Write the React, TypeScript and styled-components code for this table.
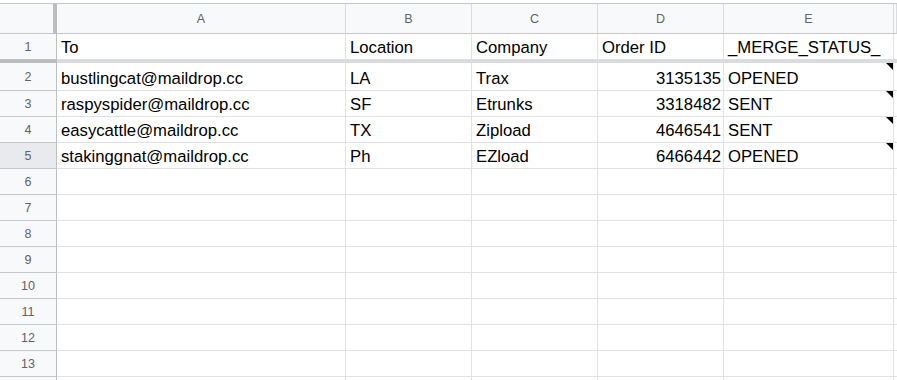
import React from 'react';
import styled, { createGlobalStyle } from 'styled-components';

const GlobalStyle = createGlobalStyle`
  html, body {
    margin: 0;
    padding: 0;
    background: #ffffff;
  }
  body {
    font-family: "Liberation Sans", Arial, sans-serif;
    overflow: hidden;
  }
`;

// widths of the row-number column and columns A..E, rest goes to F
const TEMPLATE = '57px 289px 126px 126px 126px 170px 1fr';
const COLUMNS = ['A', 'B', 'C', 'D', 'E'];
const HEADERS = ['To', 'Location', 'Company', 'Order ID', '_MERGE_STATUS_'];

type Record = {
  to: string;
  location: string;
  company: string;
  orderId: number;
  status: string;
};

const records: Record[] = [
  { to: 'bustlingcat@maildrop.cc', location: 'LA', company: 'Trax', orderId: 3135135, status: 'OPENED' },
  { to: 'raspyspider@maildrop.cc', location: 'SF', company: 'Etrunks', orderId: 3318482, status: 'SENT' },
  { to: 'easycattle@maildrop.cc', location: 'TX', company: 'Zipload', orderId: 4646541, status: 'SENT' },
  { to: 'stakinggnat@maildrop.cc', location: 'Ph', company: 'EZload', orderId: 6466442, status: 'OPENED' },
];

const LAST_NUMBERED_ROW = 13;
const HIGHLIGHTED_ROW = 5;

const App: React.FC = () => {
  const emptyRows = [];
  for (let n = records.length + 2; n <= LAST_NUMBERED_ROW; n++) emptyRows.push(n);

  return (
    <>
      <GlobalStyle />
      <Page>
        <Sheet>
          <HeaderRow>
            <Corner />
            {COLUMNS.map((c) => (
              <ColumnHeader key={c}>{c}</ColumnHeader>
            ))}
            <ColumnHeader />
          </HeaderRow>

          <Row $height={25} $noBorder>
            <RowNumber>1</RowNumber>
            {HEADERS.map((h) => (
              <Cell key={h}>{h}</Cell>
            ))}
            <Cell />
          </Row>

          <FreezeBar>
            <FreezeHandle />
            <FreezeLine />
          </FreezeBar>

          {records.map((r, i) => {
            const n = i + 2;
            return (
              <Row key={r.to} $height={i === 0 ? 28 : 26}>
                <RowNumber $active={n === HIGHLIGHTED_ROW}>{n}</RowNumber>
                <Cell>{r.to}</Cell>
                <Cell>{r.location}</Cell>
                <Cell>{r.company}</Cell>
                <Cell $align="right">{r.orderId}</Cell>
                <Cell>
                  {r.status}
                  <NoteMark />
                </Cell>
                <Cell />
              </Row>
            );
          })}

          {emptyRows.map((n) => (
            <Row key={n} $height={26}>
              <RowNumber $active={n === HIGHLIGHTED_ROW}>{n}</RowNumber>
              {COLUMNS.map((c) => (
                <Cell key={c} />
              ))}
              <Cell />
            </Row>
          ))}

          {/* top sliver of the next row, scrolled below the fold */}
          <Row $height={26}>
            <RowNumber />
            {COLUMNS.map((c) => (
              <Cell key={c} />
            ))}
            <Cell />
          </Row>
        </Sheet>
      </Page>
    </>
  );
};

export default App;

const Page = styled.div`
  width: 897px;
  height: 380px;
  padding-top: 3px;
  box-sizing: border-box;
  overflow: hidden;
  background: #ffffff;
`;

const Sheet = styled.div`
  display: flex;
  flex-direction: column;
  border-top: 1px solid #c4c7c5;
`;

const HeaderRow = styled.div`
  display: grid;
  grid-template-columns: ${TEMPLATE};
  height: 30px;
  background: #f8f9fa;
`;

const Corner = styled.div`
  box-sizing: border-box;
  border-right: 4px solid #bdbdbd;
  border-bottom: 1px solid #c4c7c5;
`;

const ColumnHeader = styled.div`
  box-sizing: border-box;
  display: flex;
  align-items: center;
  justify-content: center;
  border-right: 1px solid #dadce0;
  border-bottom: 1px solid #c4c7c5;
  font-size: 12.5px;
  color: #5f6368;
`;

const Row = styled.div<{ $height: number; $noBorder?: boolean }>`
  display: grid;
  grid-template-columns: ${TEMPLATE};
  height: ${(p) => p.$height}px;
  flex-shrink: 0;

  & > * {
    border-bottom: ${(p) => (p.$noBorder ? 'none' : '1px solid #e2e2e2')};
  }
`;

const RowNumber = styled.div<{ $active?: boolean }>`
  box-sizing: border-box;
  display: flex;
  align-items: center;
  justify-content: center;
  background: ${(p) => (p.$active ? '#e8eaed' : '#f8f9fa')};
  border-right: 1px solid #c0c0c0;
  font-size: 12.5px;
  color: #5f6368;

  && {
    border-bottom-color: #c4c7c5;
  }
`;

const Cell = styled.div<{ $align?: 'left' | 'right' }>`
  position: relative;
  box-sizing: border-box;
  display: flex;
  align-items: flex-end;
  justify-content: ${(p) => (p.$align === 'right' ? 'flex-end' : 'flex-start')};
  padding: 0 2px 1px 4px;
  border-right: 1px solid #e2e2e2;
  font-size: 16.7px;
  color: #000000;
  white-space: nowrap;
  overflow: hidden;
`;

// small black corner flag on cells that carry a note
const NoteMark = styled.span`
  position: absolute;
  top: 0;
  right: 0;
  width: 0;
  height: 0;
  border-left: 7px solid transparent;
  border-top: 7px solid #000000;
`;

const FreezeBar = styled.div`
  display: grid;
  grid-template-columns: 57px 1fr;
  height: 4px;
`;

const FreezeHandle = styled.div`
  background: #bdbdbd;
`;

const FreezeLine = styled.div`
  background: #dadce0;
`;
